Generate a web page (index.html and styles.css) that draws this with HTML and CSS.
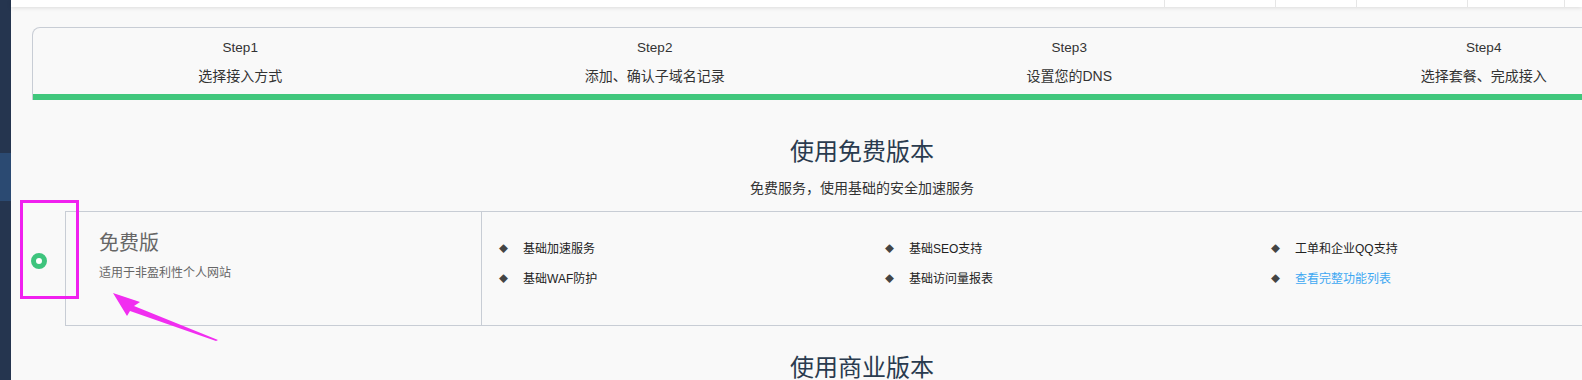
FILE: index.html
```html
<!DOCTYPE html>
<html lang="zh-CN">
<head>
<meta charset="utf-8">
<title>接入</title>
<link rel="stylesheet" href="styles.css">
</head>
<body>
<div class="app">
  <aside class="sidebar">
    <div class="side-active"></div>
  </aside>
  <div class="main">
    <header class="topbar">
      <div class="top-spacer"></div>
      <div class="top-item w111"></div>
      <div class="top-item w81"></div>
      <div class="top-item w111"></div>
      <div class="top-item w97"></div>
      <div class="top-item w18"></div>
    </header>
    <div class="content">
      <section class="steps">
        <div class="step-row">
          <div class="step"><div class="step-no">Step1</div><div class="step-name">选择接入方式</div></div>
          <div class="step"><div class="step-no">Step2</div><div class="step-name">添加、确认子域名记录</div></div>
          <div class="step"><div class="step-no">Step3</div><div class="step-name">设置您的DNS</div></div>
          <div class="step"><div class="step-no">Step4</div><div class="step-name">选择套餐、完成接入</div></div>
        </div>
        <div class="progress"></div>
      </section>

      <h2 class="sec-title">使用免费版本</h2>
      <p class="sec-sub">免费服务，使用基础的安全加速服务</p>

      <div class="plan-row">
        <div class="radio-cell"><span class="radio"></span></div>
        <div class="plan">
          <div class="plan-info">
            <div class="plan-name">免费版</div>
            <div class="plan-desc">适用于非盈利性个人网站</div>
          </div>
          <ul class="features">
            <li><span class="dot">◆</span>基础加速服务</li>
            <li><span class="dot">◆</span>基础SEO支持</li>
            <li><span class="dot">◆</span>工单和企业QQ支持</li>
            <li><span class="dot">◆</span>基础WAF防护</li>
            <li><span class="dot">◆</span>基础访问量报表</li>
            <li><span class="dot">◆</span><a class="link" href="#">查看完整功能列表</a></li>
          </ul>
        </div>
      </div>

      <h2 class="sec-title biz">使用商业版本</h2>
    </div>
  </div>
</div>
<div class="mark-box"></div>
<svg class="mark-arrow" width="120" height="60" viewBox="0 0 120 60">
  <polygon points="1,3 28,12 22,16 106,50 104,51 18,21 15,26" fill="#f12ef0"/>
</svg>
</body>
</html>
```

FILE: styles.css
```css
* { box-sizing: border-box; }
html, body { margin: 0; padding: 0; }
body {
  background: #f9f9f9;
  font-family: "Liberation Sans", "Noto Sans CJK SC", sans-serif;
  color: #333;
  width: 1582px;
  height: 380px;
  overflow: hidden;
  position: relative;
}
.app { display: flex; height: 380px; }
.sidebar {
  width: 11px;
  flex: none;
  background: #25354f;
  padding-top: 153px;
}
.side-active { height: 48px; background: #2b4a72; }
.main { flex: 1; min-width: 0; display: flex; flex-direction: column; }
.topbar {
  height: 7px;
  flex: none;
  background: #fff;
  display: flex;
  box-shadow: 0 1px 4px rgba(0,0,0,0.12);
  position: relative;
  z-index: 1;
}
.top-spacer { flex: 1; }
.top-item { border-left: 1px solid #e6e6e6; }
.w111 { width: 111px; }
.w81 { width: 81px; }
.w97 { width: 97px; }
.w18 { width: 18px; }

.content { padding: 20px 0 0 21px; width: 1681px; }
.steps {
  width: 1660px;
  border: 1px solid #c8cdd5;
  border-bottom: none;
  border-radius: 8px 0 0 0;
}
.step-row { display: grid; grid-template-columns: repeat(4, 1fr); padding: 10px 0 8px; }
.step { text-align: center; color: #333; }
.step-no { font-size: 13.5px; line-height: 20px; }
.step-name { font-size: 14px; line-height: 20px; margin-top: 8px; }
.progress { height: 6px; background: #40c77c; }

.sec-title {
  width: 1660px;
  margin: 35px 0 0;
  text-align: center;
  font-size: 24px;
  font-weight: normal;
  line-height: 34px;
  color: #2a3b4f;
}
.sec-sub {
  width: 1660px;
  margin: 9px 0 0;
  text-align: center;
  font-size: 14px;
  line-height: 20px;
  color: #333;
}
.biz { margin-top: 25px; }

.plan-row { display: flex; margin-top: 13px; width: 1660px; }
.radio-cell { width: 33px; flex: none; padding-top: 42px; }
.radio {
  display: block;
  width: 16px;
  height: 16px;
  margin-left: -1px;
  border-radius: 50%;
  border: 5px solid #3ec47d;
  background: #fff;
}
.plan {
  flex: 1;
  height: 115px;
  display: flex;
  border: 1px solid #c8cdd5;
}
.plan-info {
  width: 416px;
  flex: none;
  border-right: 1px solid #c8cdd5;
  padding: 18px 0 0 33px;
}
.plan-name { font-size: 20px; line-height: 26px; color: #666; }
.plan-desc { font-size: 12px; line-height: 18px; color: #666; margin-top: 8px; }
.features {
  list-style: none;
  margin: 0;
  padding: 22px 0 0 17px;
  display: grid;
  grid-template-columns: repeat(3, 386px);
  grid-auto-rows: 30px;
  align-content: start;
}
.features li {
  font-size: 12px;
  line-height: 18px;
  color: #222;
  display: flex;
  align-items: center;
}
.dot { width: 24px; font-size: 9px; color: #444; }
.link { color: #3ea8f2; text-decoration: none; }

.mark-box {
  position: absolute;
  left: 20px;
  top: 200px;
  width: 59px;
  height: 99px;
  border: 3px solid #f020ef;
}
.mark-arrow {
  position: absolute;
  left: 112px;
  top: 290px;
}
```
